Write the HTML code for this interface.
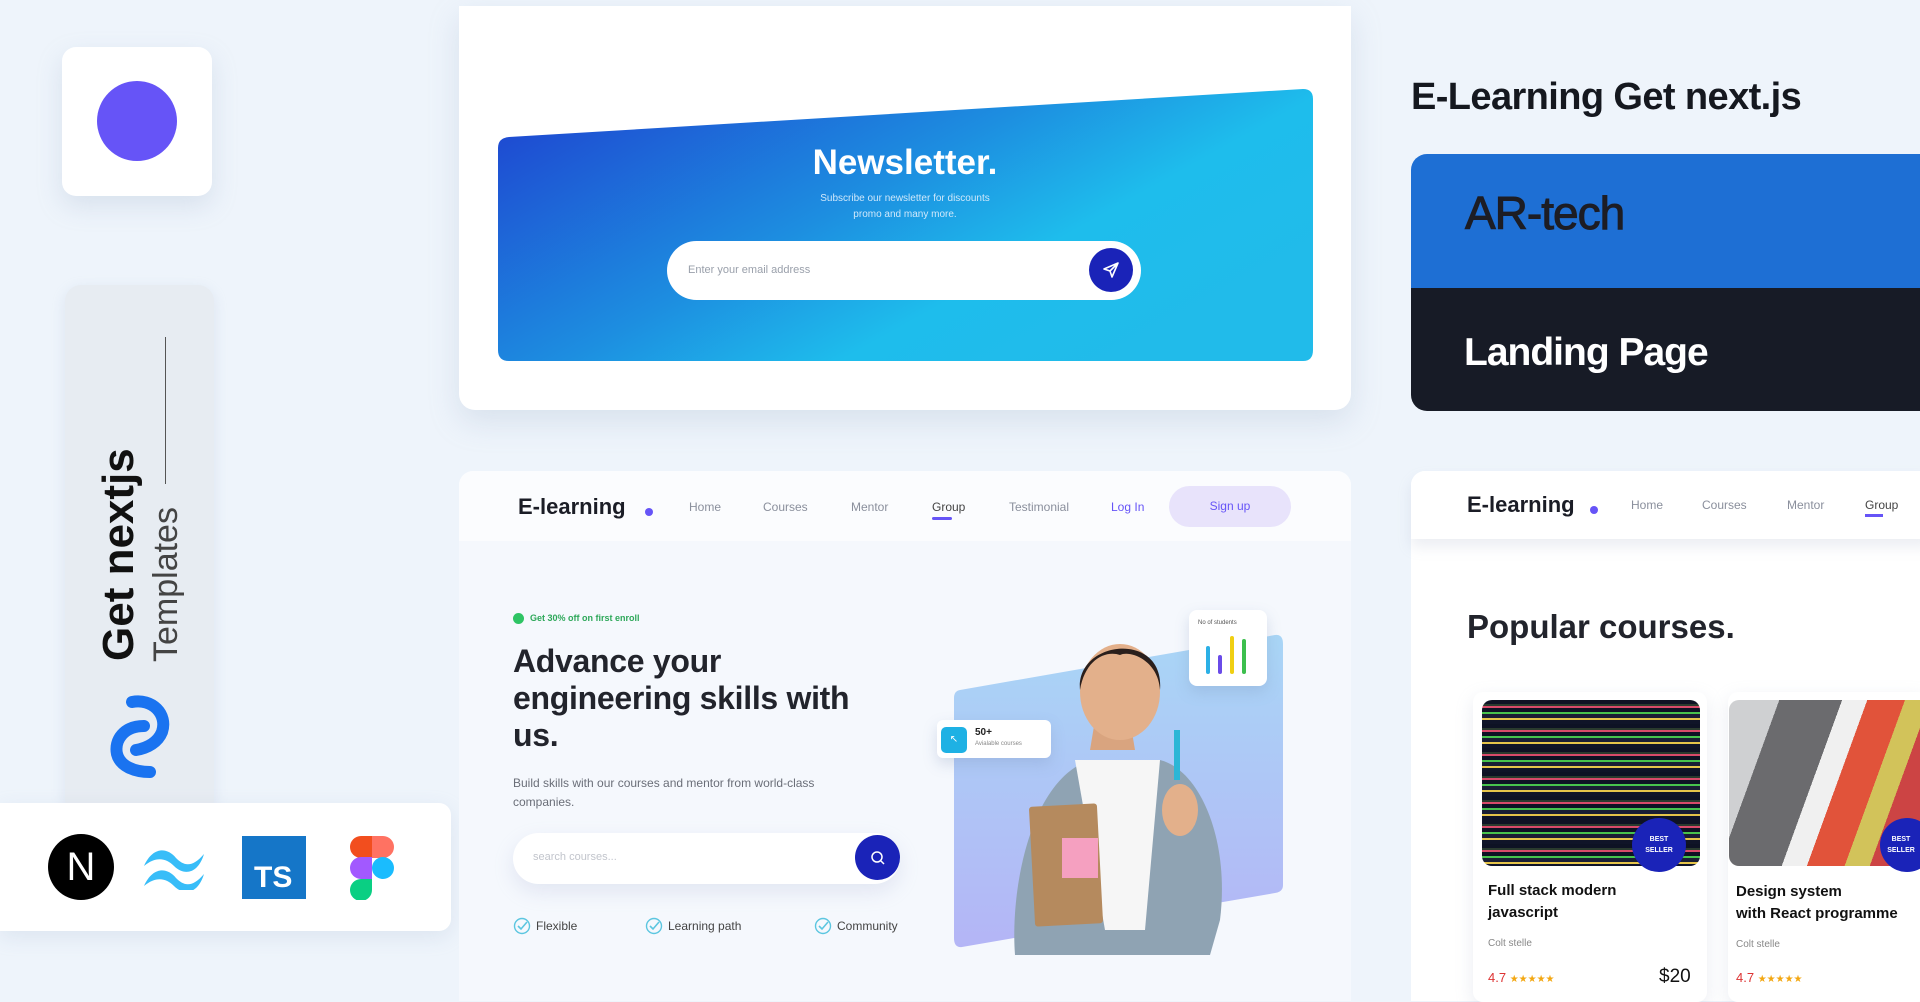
<!DOCTYPE html>
<html><head><meta charset="utf-8"><style>
*{margin:0;padding:0;box-sizing:border-box}
body{width:1920px;height:989px;overflow:hidden;background:#eef4fb;font-family:"Liberation Sans",sans-serif;position:relative}
.a{position:absolute}
.nav{font-size:12px;color:#8a8f9c}
</style></head><body>
<!-- left column -->
<div class="a" style="left:62px;top:47px;width:150px;height:149px;background:#fff;border-radius:14px;box-shadow:0 10px 25px rgba(150,170,200,.25)"></div>
<div class="a" style="left:97px;top:81px;width:80px;height:80px;border-radius:50%;background:#6654f7"></div>
<div class="a" style="left:65px;top:285px;width:149px;height:530px;background:#e7ecf2;border-radius:16px;box-shadow:0 4px 14px rgba(150,170,200,.2)"></div>
<div class="a" style="left:165px;top:337px;width:1px;height:147px;background:#555"></div>
<div class="a" style="left:119px;top:661px;transform:rotate(-90deg);transform-origin:0 0;font-size:44px;font-weight:bold;color:#111;white-space:nowrap;line-height:1;margin-left:-22px">Get nextjs</div>
<div class="a" style="left:183px;top:662px;transform:rotate(-90deg);transform-origin:0 0;font-size:34px;color:#444;white-space:nowrap;line-height:1;margin-left:-34px;font-weight:300">Templates</div>
<svg class="a" style="left:90px;top:680px" width="120" height="120" viewBox="0 0 120 120"><path d="M42 22 C62 18 78 34 72 52 C68 62 58 68 46 70" fill="none" stroke="#1a73f0" stroke-width="12" stroke-linecap="round"/><path d="M54 46 C34 46 24 60 27 74 C30 86 44 92 60 92" fill="none" stroke="#1a73f0" stroke-width="12" stroke-linecap="round"/></svg>
<div class="a" style="left:0;top:803px;width:451px;height:128px;background:#fff;border-radius:0 12px 12px 0;box-shadow:0 6px 20px rgba(150,170,200,.2)"></div>
<div class="a" style="left:48px;top:834px;width:66px;height:66px;border-radius:50%;background:#000;color:#fff;font-size:40px;text-align:center;line-height:66px;font-weight:300">N</div>
<svg class="a" style="left:142px;top:846px" width="66" height="44" viewBox="0 0 66 44"><path d="M2 20 C10 2 24 0 34 12 C42 20 50 22 62 8 C56 28 42 30 32 20 C24 12 14 10 2 20Z" fill="#38bdf8"/><path d="M2 40 C10 22 24 20 34 32 C42 40 50 42 62 28 C56 48 42 50 32 40 C24 32 14 30 2 40Z" fill="#38bdf8"/></svg>
<div class="a" style="left:242px;top:836px;width:64px;height:63px;background:#1576c8;color:#fff;font-weight:bold;font-size:30px;padding:26px 0 0 12px;line-height:32px">TS</div>
<svg class="a" style="left:350px;top:836px" width="44" height="64" viewBox="0 0 44 64"><path d="M22 0H11a11 11 0 0 0 0 22h11z" fill="#f24e1e"/><path d="M22 0h11a11 11 0 0 1 0 22H22z" fill="#ff7262"/><path d="M22 21H11a11 11 0 0 0 0 22h11z" fill="#a259ff"/><circle cx="33" cy="32" r="11" fill="#1abcfe"/><path d="M22 43H11a11 11 0 1 0 11 11z" fill="#0acf83"/></svg>

<!-- newsletter card -->
<div class="a" style="left:459px;top:6px;width:892px;height:404px;background:#fff;border-radius:0 0 16px 16px;box-shadow:0 12px 30px rgba(150,170,200,.25)"></div>
<svg class="a" style="left:497px;top:88px" width="817" height="274" viewBox="0 0 817 274"><defs><linearGradient id="g" x1="0" y1="0" x2="1" y2="0.6"><stop offset="0" stop-color="#1e3fcf"/><stop offset=".5" stop-color="#1d8ee0"/><stop offset=".75" stop-color="#1ebdec"/><stop offset="1" stop-color="#21bbea"/></linearGradient></defs><path d="M12 49 L806 1 Q816 1 816 11 V262 Q816 273 806 273 H12 Q1 273 1 262 V60 Q1 50 12 49Z" fill="url(#g)"/></svg>
<div class="a" style="left:705px;top:143px;width:400px;text-align:center;color:#fff;font-weight:bold;font-size:35px">Newsletter.</div>
<div class="a" style="left:705px;top:191px;width:400px;text-align:center;color:#cfe8fb;font-size:10px;line-height:16px">Subscribe our newsletter for discounts<br>promo and many more.</div>
<div class="a" style="left:667px;top:241px;width:474px;height:59px;background:#fff;border-radius:30px"></div>
<div class="a" style="left:688px;top:264px;font-size:11px;color:#9aa0ab">Enter your email address</div>
<div class="a" style="left:1089px;top:248px;width:44px;height:44px;border-radius:50%;background:#1a23b8"></div>
<svg class="a" style="left:1101px;top:260px" width="20" height="20" viewBox="0 0 20 20"><path d="M17 3 L3 9 L9 11 L11 17Z M9 11 L17 3" fill="none" stroke="#fff" stroke-width="1.6" stroke-linejoin="round"/></svg>

<!-- right top -->
<div class="a" style="left:1411px;top:76px;font-size:38px;font-weight:bold;color:#15181f;letter-spacing:-.6px">E-Learning Get next.js</div>
<div class="a" style="left:1411px;top:154px;width:509px;height:134px;background:#1e6fd4;border-radius:16px 0 0 0"></div>
<div class="a" style="left:1411px;top:288px;width:509px;height:123px;background:#171b26;border-radius:0 0 0 16px"></div>
<div class="a" style="left:1465px;top:186px;font-size:46px;color:#1d1d24;letter-spacing:-1px;-webkit-text-stroke:1px #1d1d24">AR-tech</div>
<div class="a" style="left:1464px;top:331px;font-size:39px;color:#fff;font-weight:bold;letter-spacing:-1px">Landing Page</div>

<!-- middle bottom card -->
<div class="a" style="left:459px;top:471px;width:892px;height:530px;background:#f5f8fd;border-radius:14px 14px 0 0"></div>
<div class="a" style="left:459px;top:471px;width:892px;height:70px;background:#fbfcfe;border-radius:14px 14px 0 0"></div>
<div class="a" style="left:518px;top:494px;font-size:22px;font-weight:bold;color:#1b1d26">E-learning</div>
<div class="a" style="left:645px;top:508px;width:8px;height:8px;border-radius:50%;background:#6654f7"></div>
<div class="a nav" style="left:689px;top:500px">Home</div>
<div class="a nav" style="left:763px;top:500px">Courses</div>
<div class="a nav" style="left:851px;top:500px">Mentor</div>
<div class="a nav" style="left:932px;top:500px;color:#444">Group</div>
<div class="a" style="left:932px;top:517px;width:20px;height:3px;background:#6654f7;border-radius:2px"></div>
<div class="a nav" style="left:1009px;top:500px">Testimonial</div>
<div class="a nav" style="left:1111px;top:500px;color:#6654f7">Log In</div>
<div class="a" style="left:1169px;top:486px;width:122px;height:41px;border-radius:21px;background:#e8e3fb;color:#6654f7;font-size:12px;text-align:center;line-height:41px">Sign up</div>

<div class="a" style="left:513px;top:613px;width:11px;height:11px;border-radius:50%;background:#2ec464"></div>
<div class="a" style="left:530px;top:613px;font-size:9px;color:#2ea85a;font-weight:bold">Get 30% off on first enroll</div>
<div class="a" style="left:513px;top:643px;font-size:32px;font-weight:bold;color:#22242c;line-height:37px;letter-spacing:-.3px">Advance your<br>engineering skills with<br>us.</div>
<div class="a" style="left:513px;top:774px;font-size:12px;color:#6a6e78;line-height:19px">Build skills with our courses and mentor from world-class<br>companies.</div>
<div class="a" style="left:513px;top:833px;width:387px;height:51px;background:#fff;border-radius:26px;box-shadow:0 8px 20px rgba(150,160,200,.2)"></div>
<div class="a" style="left:533px;top:851px;font-size:11px;color:#c2c5cc">search courses...</div>
<div class="a" style="left:855px;top:835px;width:45px;height:45px;border-radius:50%;background:#1a23b8"></div>
<svg class="a" style="left:868px;top:848px" width="20" height="20"><circle cx="9" cy="9" r="5" fill="none" stroke="#fff" stroke-width="1.5"/><path d="M13 13l3 3" stroke="#fff" stroke-width="1.5"/></svg>
<svg class="a" style="left:513px;top:917px" width="18" height="18"><circle cx="9" cy="9" r="7.5" fill="none" stroke="#5cc6e0" stroke-width="1.4"/><path d="M5 9l3 3 6-7" fill="none" stroke="#5cc6e0" stroke-width="1.6"/></svg>
<div class="a" style="left:536px;top:919px;font-size:12px;color:#444">Flexible</div>
<svg class="a" style="left:645px;top:917px" width="18" height="18"><circle cx="9" cy="9" r="7.5" fill="none" stroke="#5cc6e0" stroke-width="1.4"/><path d="M5 9l3 3 6-7" fill="none" stroke="#5cc6e0" stroke-width="1.6"/></svg>
<div class="a" style="left:668px;top:919px;font-size:12px;color:#444">Learning path</div>
<svg class="a" style="left:814px;top:917px" width="18" height="18"><circle cx="9" cy="9" r="7.5" fill="none" stroke="#5cc6e0" stroke-width="1.4"/><path d="M5 9l3 3 6-7" fill="none" stroke="#5cc6e0" stroke-width="1.6"/></svg>
<div class="a" style="left:837px;top:919px;font-size:12px;color:#444">Community</div>

<!-- hero image -->
<svg class="a" style="left:930px;top:600px" width="360" height="360" viewBox="0 0 360 360"><defs><linearGradient id="b" x1="0" y1="0" x2="0" y2="1"><stop offset="0" stop-color="#a9d6f6"/><stop offset="1" stop-color="#b4b5f6"/></linearGradient></defs>
<path d="M30 90 L345 35 Q353 34 353 44 V285 Q353 292 345 293 L32 347 Q24 348 24 338 V98 Q24 91 30 90Z" fill="url(#b)"/>
<path d="M85 355 C80 290 100 180 160 160 L230 160 C270 170 300 240 290 320 L280 355Z" fill="#8fa3b3"/>
<path d="M145 160 L175 330 L215 330 L230 160Z" fill="#f6f6f6"/>
<rect x="102" y="205" width="68" height="120" rx="3" fill="#b58a5e" transform="rotate(-3 136 265)"/>
<rect x="132" y="238" width="36" height="40" fill="#f5a0c0"/>
<path d="M160 150 L165 120 L200 120 L205 150Z" fill="#d9a47f"/>
<ellipse cx="190" cy="92" rx="40" ry="48" fill="#e3b08b"/>
<path d="M150 90 C145 40 235 30 230 90 C228 60 200 50 190 55 C175 50 155 60 150 90Z" fill="#2a1f1c"/>
<rect x="244" y="130" width="6" height="50" fill="#2bb6d6"/>
<ellipse cx="250" cy="210" rx="18" ry="26" fill="#e3b08b"/>
</svg>
<div class="a" style="left:1189px;top:610px;width:78px;height:76px;background:#fff;border-radius:8px;box-shadow:0 6px 14px rgba(120,140,180,.25)"></div>
<div class="a" style="left:1198px;top:620px;font-size:6px;color:#555">No of students</div>
<div class="a" style="left:1206px;top:646px;width:4px;height:28px;background:#2bb0e6;border-radius:2px"></div>
<div class="a" style="left:1218px;top:655px;width:4px;height:19px;background:#6a4be8;border-radius:2px"></div>
<div class="a" style="left:1230px;top:636px;width:4px;height:38px;background:#f0cf12;border-radius:2px"></div>
<div class="a" style="left:1242px;top:639px;width:4px;height:35px;background:#3cbf4d;border-radius:2px"></div>
<div class="a" style="left:937px;top:720px;width:114px;height:38px;background:#fff;border-radius:6px;box-shadow:0 6px 14px rgba(120,140,180,.25)"></div>
<div class="a" style="left:941px;top:727px;width:26px;height:26px;background:#1eb1e4;border-radius:5px;color:#fff;font-size:10px;text-align:center;line-height:26px">↖</div>
<div class="a" style="left:975px;top:727px;font-size:10px;font-weight:bold;color:#222">50+</div>
<div class="a" style="left:975px;top:741px;font-size:6px;color:#888">Avialable courses</div>

<!-- right bottom card -->
<div class="a" style="left:1411px;top:471px;width:520px;height:530px;background:#fff;border-radius:14px 0 0 0"></div>
<div class="a" style="left:1411px;top:471px;width:520px;height:68px;background:#fff;border-radius:14px 0 0 0;box-shadow:0 8px 14px rgba(150,160,190,.18)"></div>
<div class="a" style="left:1467px;top:492px;font-size:22px;font-weight:bold;color:#1b1d26">E-learning</div>
<div class="a" style="left:1590px;top:506px;width:8px;height:8px;border-radius:50%;background:#6654f7"></div>
<div class="a nav" style="left:1631px;top:498px">Home</div>
<div class="a nav" style="left:1702px;top:498px">Courses</div>
<div class="a nav" style="left:1787px;top:498px">Mentor</div>
<div class="a nav" style="left:1865px;top:498px;color:#444">Group</div>
<div class="a" style="left:1865px;top:514px;width:18px;height:3px;background:#6654f7"></div>
<div class="a" style="left:1467px;top:608px;font-size:33px;font-weight:bold;color:#22242c">Popular courses.</div>
<div class="a" style="left:1473px;top:692px;width:234px;height:310px;background:#fff;border-radius:10px;box-shadow:0 6px 18px rgba(150,160,190,.2)"></div>
<div class="a" style="left:1482px;top:700px;width:218px;height:166px;border-radius:10px;background:repeating-linear-gradient(180deg,#0e1224 0 4px,#2a3a2e 4px 6px,#d84a6a 6px 8px,#0e1224 8px 12px,#47c24d 12px 14px,#1a1e34 14px 18px,#e5c44a 18px 20px,#101428 20px 24px)"></div>
<div class="a" style="left:1632px;top:818px;width:54px;height:54px;border-radius:50%;background:#1a23b8;color:#fff;font-size:7px;font-weight:bold;text-align:center;line-height:11px;padding-top:16px">BEST<br>SELLER</div>
<div class="a" style="left:1488px;top:880px;font-size:15px;font-weight:bold;color:#111;line-height:22px">Full stack modern<br>javascript</div>
<div class="a" style="left:1488px;top:938px;font-size:10px;color:#888">Colt stelle</div>
<div class="a" style="left:1488px;top:970px;font-size:13px;color:#d33">4.7 <span style="color:#f3a712;font-size:10px">★★★★★</span></div>
<div class="a" style="left:1659px;top:966px;font-size:19px;color:#111">$20</div>
<div class="a" style="left:1728px;top:692px;width:200px;height:310px;background:#fff;border-radius:10px;box-shadow:0 6px 18px rgba(150,160,190,.2)"></div>
<div class="a" style="left:1729px;top:700px;width:191px;height:166px;border-radius:10px 0 0 10px;background:linear-gradient(110deg,#cfd0d2 0 20%,#6b6b6e 20% 45%,#f0f0f0 45% 55%,#e1533a 55% 70%,#d2c35a 70% 80%,#c44 80%)"></div>
<div class="a" style="left:1880px;top:818px;width:54px;height:54px;border-radius:50%;background:#1a23b8;color:#fff;font-size:7px;font-weight:bold;text-align:center;line-height:11px;padding-top:16px;padding-right:12px">BEST<br>SELLER</div>
<div class="a" style="left:1736px;top:881px;font-size:15px;font-weight:bold;color:#111;line-height:22px">Design system<br>with React programme</div>
<div class="a" style="left:1736px;top:939px;font-size:10px;color:#888">Colt stelle</div>
<div class="a" style="left:1736px;top:970px;font-size:13px;color:#d33">4.7 <span style="color:#f3a712;font-size:10px">★★★★★</span></div>
</body></html>
